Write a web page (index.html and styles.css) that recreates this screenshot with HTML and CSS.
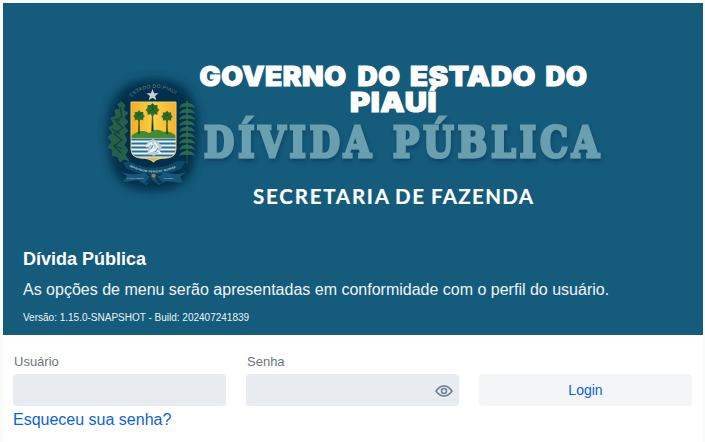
FILE: index.html
```html
<!DOCTYPE html>
<html lang="pt-BR">
<head>
<meta charset="utf-8">
<title>Dívida Pública</title>
<link rel="stylesheet" href="styles.css">
</head>
<body>
<main class="card">
  <header class="hero">
    <svg class="brand" viewBox="3 3 700 240" width="700" height="240">
      <defs>
        <filter id="soft" x="-30%" y="-30%" width="160%" height="160%"><feGaussianBlur stdDeviation="5"/></filter>
        <filter id="shade" x="-10%" y="-20%" width="120%" height="150%"><feDropShadow dx="1" dy="3" stdDeviation="2" flood-color="#052a42" flood-opacity=".4"/></filter>
        <linearGradient id="sun"><stop offset="0" stop-color="#f3ac20"/><stop offset=".5" stop-color="#ffd047"/><stop offset="1" stop-color="#f6b127"/></linearGradient>
        <clipPath id="shield"><path d="M131 102h45v47q0 8-9 9-10 0-13.500 4-4-4-13.500-4-9-1-9-9z"/></clipPath>
        <path id="arc" d="M131 97Q153 79 178 96"/>
        <path id="motto" d="M131 163Q153 174 177 163"/>
        <g id="palm">
          <path d="M-.8 0 0-20 .8 0z" stroke="#316b2c" stroke-width=".8"/>
          <path d="M0-28l2 2 3 0 0 3 2 2-2 2 0 3-3-1-2 3-2-3-3 1 0-3-2-2 2-2 0-3 3 0z" fill="#2d702c"/>
          <path d="M0-22l-4-3M0-22l4-3M0-22l-4 4M0-22l4 4M0-22v-5" stroke="#174e25" stroke-width=".7"/>
        </g>
        <path id="leaf" d="M0 0Q-4-1-8 1-6-4-1-4L0-7 1-4Q6-4 8 1 4-1 0 0Z"/>
      </defs>
      <path d="M151 79C187 78 199 95 198 137S184 190 153 191 109 177 107 139 119 80 151 79Z" fill="#052b45" opacity=".88" filter="url(#soft)"/>
      <g fill="#265f49" stroke="#3b7a58" stroke-width=".5">
        <path d="M120 101l5 4-2 5 5 3-4 4 4 5-4 4 4 5-4 3 3 6-3 5 4 5-3 5 4 6-5-2-4 3-2-5-6-2 1-5-5-3 4-5-4-5 5-4-4-5 5-4-3-6 5-2-1-6 5-1-2-5 4-1z"/>
        <path d="M120 107l2 9-6 5 7 7-9 6 8 6-8 6 7 7M112 129l8 5M114 145l8 4M114 119l6 2" fill="none" stroke="#11403d" stroke-width="1.200"/>
      </g>
      <path d="M187 164V101" stroke="#255d50" stroke-width=".8"/>
      <g fill="#2c6a4f">
        <use href="#leaf" x="187" y="107"/><use href="#leaf" x="187" y="113"/><use href="#leaf" x="187" y="119"/><use href="#leaf" x="187" y="125"/><use href="#leaf" x="187" y="131"/><use href="#leaf" x="187" y="137"/><use href="#leaf" x="187" y="143"/><use href="#leaf" x="187" y="149"/><use href="#leaf" x="187" y="155"/>
      </g>
      <text class="seal-name"><textPath href="#arc" textLength="48">ESTADO DO PIAUÍ</textPath></text>
      <path d="M152.500 89l1.600 4.200h4.400l-3.400 2.800 1.200 4.300-3.800-2.500-3.800 2.500 1.200-4.300-3.400-2.800h4.400z" fill="#c6d0d6"/>
      <g clip-path="url(#shield)">
        <path d="M131 102h45v36h-45z" fill="url(#sun)"/>
        <path d="M131 136q10-8 18-3 7-6 15-1 6-2 12 4v4h-45z" fill="#458a2e"/>
        <use href="#palm" transform="translate(139 134) scale(.85)"/>
        <use href="#palm" transform="translate(152.500 131)"/>
        <use href="#palm" transform="translate(167 134) scale(.83)"/>
        <path d="M131 138h45v25h-45z" fill="#eef4f6"/>
        <path d="M131 139.500h45M131 143.500h45M131 147.500h45M131 151.500h45M131 155.500h45" stroke="#286f98" stroke-width="2"/>
        <path d="M131 157.500h45v6h-45z" fill="#dcb84c"/>
        <path d="M149 141l4-2 4 2 5 5-2 6-6 4-7-3 2-5-4-2z" fill="#b8cdd6"/>
        <path d="M146 147l5-4 3 4-4 5 6-2 5 3M154 142l4 5-6 4" fill="none" stroke="#f3f7f9" stroke-width="1.300"/>
        <path d="M153 145l-2 4M158 148l-3 4" fill="none" stroke="#5f899f"/>
      </g>
      <path d="M131 102h45v47q0 8-9 9-10 0-13.500 4-4-4-13.500-4-9-1-9-9z" fill="none" stroke="#e6cf74" stroke-width="1"/>
      <path d="M123 162h8Q153 174 178 161h8l-5 8-8 3q-20 6-38 0l-9-4z" fill="#0d4a69"/>
      <path d="M121 172q11 4 23 1l5 3 5-1 6 1 4-4q12 4 22 0l-6 5 3 6-17-2-7 4-6-5-7 5-8-5-15 2 4-6z" fill="#165779"/>
      <path d="M150 176l-6 8 7-2 3-6 4 7 6 1-7-8z" fill="#0a3854"/>
      <path d="M151.500 174h4v3.500h-4z" fill="#8e8556"/>
      <text class="seal-motto" dy="4"><textPath href="#motto" textLength="45">IMPAVIDUM FERIENT RUINAE</textPath></text>
      <g class="seal-date"><text x="127" y="179" textLength="17">24 DE JANEIRO</text><text x="164" y="179" textLength="9">DE 1823</text></g>
      <g class="state">
        <text x="199.500" y="86" textLength="147" lengthAdjust="spacingAndGlyphs">GOVERNO</text>
        <text x="357.500" y="86" textLength="43" lengthAdjust="spacingAndGlyphs">DO</text>
        <text x="410" y="86" textLength="126" lengthAdjust="spacingAndGlyphs">ESTADO</text>
        <text x="545.500" y="86" textLength="42" lengthAdjust="spacingAndGlyphs">DO</text>
        <text x="350" y="112" textLength="87" lengthAdjust="spacingAndGlyphs">PIAUÍ</text>
      </g>
      <g class="system" filter="url(#shade)">
        <text x="204" y="156.500" textLength="171" lengthAdjust="spacingAndGlyphs">DÍVIDA</text>
        <text x="393" y="156.500" textLength="210" lengthAdjust="spacingAndGlyphs">PÚBLICA</text>
      </g>
      <g class="office">
        <text x="253" y="203.500" textLength="136">SECRETARIA</text>
        <text x="395" y="203.500" textLength="29">DE</text>
        <text x="431" y="203.500" textLength="102">FAZENDA</text>
      </g>
    </svg>
    <div class="intro">
      <h1>Dívida Pública</h1>
      <p class="lead">As opções de menu serão apresentadas em conformidade com o perfil do usuário.</p>
      <p class="version">Versão: 1.15.0-SNAPSHOT - Build: 202407241839</p>
    </div>
  </header>
  <form class="login">
    <div class="field"><label for="user">Usuário</label><input id="user" type="text"></div>
    <div class="field"><label for="pass">Senha</label>
      <div class="password"><input id="pass" type="password">
        <svg class="eye" viewBox="0 0 18 12" width="18" height="12"><path d="M1 6Q4.500 1 9 1t8 5q-3.500 5-8 5T1 6Z"/><circle cx="9" cy="6" r="2.500"/></svg>
      </div>
    </div>
    <button type="button">Login</button>
  </form>
  <a class="forgot">Esqueceu sua senha?</a>
</main>
</body>
</html>
```
FILE: styles.css
```css
* { box-sizing: border-box; }
body { margin: 0; padding: 3px 2px 0 3px; height: 442px; overflow: hidden; background: #f9fafa; font-family: "Liberation Sans", sans-serif; }
.card { height: 439px; background: #fff; }
.hero { height: 332px; background: #155b7c; color: #fff; overflow: hidden; }
.brand { display: block; }
.intro { padding: 4px 20px 0; }
h1, p { margin: 0; }
h1 { font-size: 18px; line-height: 24px; }
.lead { margin-top: 6px; font-size: 16px; line-height: 26px; color: #f0f5f8; white-space: nowrap; }
.version { margin-top: 8px; font-size: 10px; line-height: 13px; color: #edf3f6; }
.state { font: 900 26.5px "Inter", sans-serif; fill: #fff; stroke: #fff; stroke-width: 1.1px; letter-spacing: .5px; }
.system { font: bold 42px "DejaVu Serif", serif; fill: #6b9fb0; stroke: #6b9fb0; stroke-width: 3.2px; letter-spacing: 5px; }
.office { font: bold 20.5px "Lato", sans-serif; fill: #fff; stroke: #fff; stroke-width: .2px; }
.seal-name { font: 5px "Liberation Sans", sans-serif; fill: #70828a; }
.seal-motto { font: bold 3px "Liberation Sans", sans-serif; fill: #bdced6; }
.seal-date { font: bold 2.5px "Liberation Sans", sans-serif; fill: #9bb6c4; }
.login { display: grid; grid-template-columns: repeat(3, 213px); column-gap: 20px; padding: 19px 10px 0; align-items: end; }
.field { display: flex; flex-direction: column; gap: 5px; }
label { padding-left: 1px; font-size: 13px; line-height: 15px; color: #6d747d; }
input { display: block; width: 100%; height: 32px; border: 0; border-radius: 4px; background: #e8ebf0; }
.password { position: relative; }
.eye { position: absolute; right: 6.5px; top: 10.5px; fill: none; stroke: #6d7b91; stroke-width: 1.5; }
button { height: 32px; padding: 0; border: 0; border-radius: 4px; background: #f3f5f7; color: #0b63dd; font: 14px "Liberation Sans", sans-serif; }
.forgot { display: block; margin: 4px 0 0 10px; font-size: 16px; line-height: 19px; color: #0b63dd; }
```
